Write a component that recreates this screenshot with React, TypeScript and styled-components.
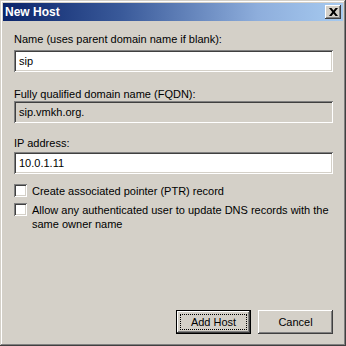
import React from "react";
import styled, { createGlobalStyle } from "styled-components";

const Global = createGlobalStyle`
  html, body { margin: 0; padding: 0; background: #D4D0C8; }
  body { font-family: "Liberation Sans", Arial, sans-serif; font-size: 11px; color: #000; }
`;

const Win = styled.div`
  width: 346px;
  height: 346px;
  box-sizing: border-box;
  padding: 3px;
  background: #D4D0C8;
  display: flex;
  flex-direction: column;
  box-shadow: inset -1px -1px #404040, inset 1px 1px #D4D0C8,
    inset -2px -2px #808080, inset 2px 2px #FFFFFF;
`;

const TitleBar = styled.div`
  height: 18px;
  flex: none;
  display: flex;
  align-items: center;
  justify-content: space-between;
  padding: 0 2px 0 2px;
  background: linear-gradient(to right, #0A246A 0%, #3A5A9A 35%, #8EAEDC 75%, #A6CAF0 100%);
`;

const Title = styled.span`
  color: #fff;
  font-weight: bold;
  font-size: 12px;
`;

const CloseBtn = styled.div`
  width: 16px;
  height: 14px;
  box-sizing: border-box;
  background: #D4D0C8;
  display: flex;
  align-items: center;
  justify-content: center;
  box-shadow: inset -1px -1px #404040, inset 1px 1px #FFFFFF,
    inset -2px -2px #808080, inset 2px 2px #D4D0C8;
`;

const Body = styled.div`
  flex: 1;
  display: flex;
  flex-direction: column;
  padding: 11px 10px 9px 11px;
`;

const Label = styled.div<{ $top: number }>`
  line-height: 14px;
  margin-top: ${(p) => p.$top}px;
  white-space: nowrap;
`;

const Field = styled.div<{ $top: number; $disabled?: boolean }>`
  height: 22px;
  box-sizing: border-box;
  margin-top: ${(p) => p.$top}px;
  background: ${(p) => (p.$disabled ? "#D4D0C8" : "#FFFFFF")};
  display: flex;
  align-items: center;
  padding: 0 5px;
  box-shadow: inset 1px 1px #808080, inset -1px -1px #FFFFFF,
    inset 2px 2px #404040, inset -2px -2px #D4D0C8;
`;

const CheckRow = styled.div<{ $top: number }>`
  display: flex;
  align-items: flex-start;
  gap: 5px;
  margin-top: ${(p) => p.$top}px;
  line-height: 14px;
  white-space: nowrap;
`;

const Box = styled.div`
  width: 13px;
  height: 13px;
  flex: none;
  box-sizing: border-box;
  background: #fff;
  box-shadow: inset 1px 1px #808080, inset -1px -1px #FFFFFF,
    inset 2px 2px #404040, inset -2px -2px #D4D0C8;
`;

const Buttons = styled.div`
  margin-top: auto;
  display: flex;
  justify-content: flex-end;
  gap: 7px;
`;

const Button = styled.div<{ $default?: boolean }>`
  width: 75px;
  height: 24px;
  box-sizing: border-box;
  background: #D4D0C8;
  display: flex;
  align-items: center;
  justify-content: center;
  position: relative;
  box-shadow: inset -1px -1px #404040, inset 1px 1px #FFFFFF,
    inset -2px -2px #808080, inset 2px 2px #D4D0C8;
  ${(p) => (p.$default ? `border: 1px solid #000;` : ``)}
`;

const Focus = styled.span`
  position: absolute;
  inset: 3px;
  border: 1px dotted #000;
`;

export default function App() {
  return (
    <>
      <Global />
      <Win>
        <TitleBar>
          <Title>New Host</Title>
          <CloseBtn>
            <svg width="9" height="8" viewBox="0 0 9 8">
              <path d="M0 0 L2.5 0 L4.5 2.6 L6.5 0 L9 0 L5.8 4 L9 8 L6.5 8 L4.5 5.4 L2.5 8 L0 8 L3.2 4 Z" fill="#000" />
            </svg>
          </CloseBtn>
        </TitleBar>
        <Body>
          <Label $top={0}>Name (uses parent domain name if blank):</Label>
          <Field $top={4}>sip</Field>
          <Label $top={15}>Fully qualified domain name (FQDN):</Label>
          <Field $top={0} $disabled>sip.vmkh.org.</Field>
          <Label $top={13}>IP address:</Label>
          <Field $top={2}>10.0.1.11</Field>
          <CheckRow $top={10}>
            <Box />
            <span>Create associated pointer (PTR) record</span>
          </CheckRow>
          <CheckRow $top={5}>
            <Box />
            <span>
              Allow any authenticated user to update DNS records with the
              <br />
              same owner name
            </span>
          </CheckRow>
          <Buttons>
            <Button $default>
              <Focus />
              Add Host
            </Button>
            <Button>Cancel</Button>
          </Buttons>
        </Body>
      </Win>
    </>
  );
}
